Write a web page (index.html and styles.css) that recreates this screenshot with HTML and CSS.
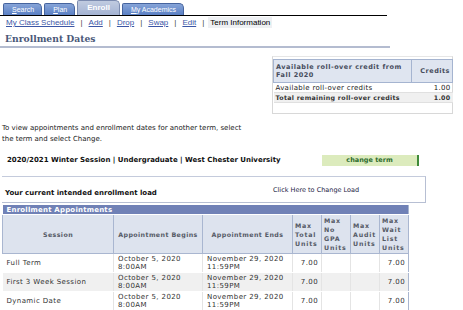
FILE: index.html
```html
<!DOCTYPE html>
<html>
<head>
  <title>Enrollment Dates</title>
  <link rel="stylesheet" href="styles.css">
</head>
<body>
  <div class="tabs">
    <a class="tab"><u>S</u>earch</a>
    <a class="tab"><u>P</u>lan</a>
    <a class="tab active">Enroll</a>
    <a class="tab"><u>M</u>y Academics</a>
  </div>
  <div class="subnav">
    <a href="#">My Class Schedule</a><span class="sep">|</span>
    <a href="#">Add</a><span class="sep">|</span>
    <a href="#">Drop</a><span class="sep">|</span>
    <a href="#">Swap</a><span class="sep">|</span>
    <a href="#">Edit</a><span class="sep">|</span>
    <span class="current">Term Information</span>
  </div>
  <h1 class="page-title">Enrollment Dates</h1>

  <div class="rollover">
    <table>
      <tr>
        <th class="label">Available roll-over credit from Fall 2020</th>
        <th class="num">Credits</th>
      </tr>
      <tr>
        <td>Available roll-over credits</td>
        <td class="num">1.00</td>
      </tr>
      <tr class="alt">
        <td>Total remaining roll-over credits</td>
        <td class="num">1.00</td>
      </tr>
    </table>
  </div>

  <p class="intro">To view appointments and enrollment dates for another term, select the term and select Change.</p>

  <div class="term-row">
    <span class="term-name">2020/2021 Winter Session | Undergraduate | West Chester University</span>
    <a class="change-btn">change term</a>
  </div>

  <div class="load-box">
    <span class="load-label">Your current intended enrollment load</span>
    <a class="load-link">Click Here to Change Load</a>
  </div>

  <table class="appts">
    <colgroup>
      <col class="w-session">
      <col class="w-begin">
      <col class="w-end">
      <col class="w-units">
      <col class="w-units">
      <col class="w-units">
      <col class="w-units">
    </colgroup>
    <tr>
      <td class="caption" colspan="7">Enrollment Appointments</td>
    </tr>
    <tr class="heads">
      <th>Session</th>
      <th>Appointment Begins</th>
      <th>Appointment Ends</th>
      <th class="units">Max Total Units</th>
      <th class="units">Max No GPA Units</th>
      <th class="units">Max Audit Units</th>
      <th class="units">Max Wait List Units</th>
    </tr>
    <tr>
      <td>Full Term</td>
      <td>October 5, 2020<br>8:00AM</td>
      <td>November 29, 2020<br>11:59PM</td>
      <td class="num">7.00</td>
      <td></td>
      <td></td>
      <td class="num">7.00</td>
    </tr>
    <tr class="alt">
      <td>First 3 Week Session</td>
      <td>October 5, 2020<br>8:00AM</td>
      <td>November 29, 2020<br>11:59PM</td>
      <td class="num">7.00</td>
      <td></td>
      <td></td>
      <td class="num">7.00</td>
    </tr>
    <tr>
      <td>Dynamic Date</td>
      <td>October 5, 2020<br>8:00AM</td>
      <td>November 29, 2020<br>11:59PM</td>
      <td class="num">7.00</td>
      <td></td>
      <td></td>
      <td class="num">7.00</td>
    </tr>
  </table>
</body>
</html>
```
FILE: styles.css
```css
body {
  margin: 0;
  background-color: #fff;
  font-family: "DejaVu Sans", Verdana, sans-serif;
  font-size: 7px;
  color: #000;
}
.tabs {
  display: flex;
  align-items: flex-end;
  gap: 2px;
  width: 384px;
  padding: 1px 0 0 3px;
  border-bottom: 1px solid #000;
  height: 14px;
}
.tab {
  display: block;
  height: 11px;
  line-height: 12px;
  padding: 0 7px 0 8px;
  font-family: "Liberation Sans", Arial, sans-serif;
  font-size: 7px;
  color: #fff;
  background: linear-gradient(#86a4d8, #5b80c4);
  border: 1px solid #46649e;
  border-bottom: none;
  border-radius: 2px 5px 0 0;
}
.tab.active {
  height: 14px;
  line-height: 13px;
  padding: 0 9px;
  font-weight: bold;
  font-size: 8px;
  background: linear-gradient(#c0cbe0, #a4b3d3);
  border-color: #7c8cb0;
}
.subnav {
  display: flex;
  align-items: center;
  height: 11px;
  padding: 1px 0 0 6px;
  font-family: "Liberation Sans", Arial, sans-serif;
  font-size: 8px;
}
.subnav a {
  color: #3b56a6;
}
.subnav .sep {
  color: #444;
  margin: 0 6px;
}
.subnav .current {
  background-color: #eef0f3;
  padding: 1px 2px;
  margin-left: -2px;
}
.page-title {
  margin: 5px 0 0;
  width: 385px;
  padding: 0 0 2px 5px;
  font-family: "DejaVu Serif", Georgia, serif;
  font-size: 9.2px;
  color: #4a5878;
  border-bottom: 2px solid #b4bcd0;
}
.rollover {
  margin: 8px 0 0 272px;
  width: 179px;
  height: 54px;
  padding: 2px 0 0 0;
  border: 1px solid #d8d8d8;
  border-top-color: #e6e6e6;
}
.rollover table {
  width: 180px;
  border-collapse: collapse;
  font-size: 7px;
  color: #222;
}
.rollover th {
  height: 22px;
  background-color: #dfe5f0;
  border: 1px solid #a5b4d0;
  font-weight: bold;
  font-size: 6.5px;
  color: #464c5c;
  letter-spacing: 0.5px;
  padding: 0 2px;
}
.rollover th.label {
  text-align: left;
  width: 133px;
}
.rollover td {
  height: 9px;
  padding: 0 2px;
  border-bottom: 1px solid #e0e0e0;
  letter-spacing: 0.3px;
}
.rollover .alt td {
  background-color: #f0f0f0;
  font-weight: bold;
  font-size: 6.3px;
  color: #333;
}
.num {
  text-align: right;
}
.intro {
  margin: 9px 0 0 2px;
  width: 250px;
  line-height: 11px;
  color: #222;
}
.term-row {
  display: flex;
  align-items: center;
  margin: 9px 0 0 7px;
  height: 12px;
}
.term-name {
  width: 315px;
  font-weight: bold;
  color: #111;
}
.change-btn {
  display: block;
  width: 95px;
  height: 11px;
  line-height: 11px;
  text-align: center;
  background-color: #dcebbd;
  border-right: 2px solid #3e8a3a;
  color: #2d6b2d;
  font-weight: bold;
  font-size: 6.5px;
}
.load-box {
  display: flex;
  align-items: flex-end;
  margin: 10px 0 0 2px;
  width: 423px;
  height: 25px;
  border: 1px solid #b7bfd3;
  border-left: none;
  border-top-color: #c4cbdc;
}
.load-label {
  width: 268px;
  padding: 0 0 5px 3px;
  font-weight: bold;
  color: #111;
}
.load-link {
  padding-bottom: 8px;
  color: #222244;
  font-size: 6.5px;
}
.appts {
  margin: 2px 0 0 2px;
  width: 406px;
  table-layout: fixed;
  border-collapse: collapse;
  font-size: 7px;
  color: #333;
  letter-spacing: 0.4px;
}
.w-session {
  width: 111px;
}
.w-begin {
  width: 89px;
}
.w-end {
  width: 90px;
}
.w-units {
  width: 29px;
}
.appts .caption {
  height: 9px;
  padding: 0 0 0 4px;
  background-color: #7081b6;
  color: #fff;
  font-weight: bold;
  letter-spacing: 0.2px;
}
.appts th {
  height: 38px;
  background-color: #dde3ee;
  border: 1px solid #a9b6d0;
  border-top: none;
  color: #555a66;
  font-weight: bold;
  font-size: 6.3px;
  line-height: 9px;
  letter-spacing: 0.4px;
  padding: 0 1px;
  white-space: nowrap;
}
.appts th.units {
  text-align: left;
  white-space: normal;
  padding: 0 2px;
  letter-spacing: 0.8px;
}
.appts td {
  height: 18px;
  padding: 0 3px 0 4px;
  line-height: 8px;
  border-bottom: 1px solid #fff;
  border-right: 1px solid #e4e4e4;
}
.appts tr.alt td {
  background-color: #f0f0f0;
}
.appts tr:last-child td {
  border-bottom: 1px solid #a9b6d0;
}
.appts td:last-child {
  border-right: 1px solid #a9b6d0;
}
```
